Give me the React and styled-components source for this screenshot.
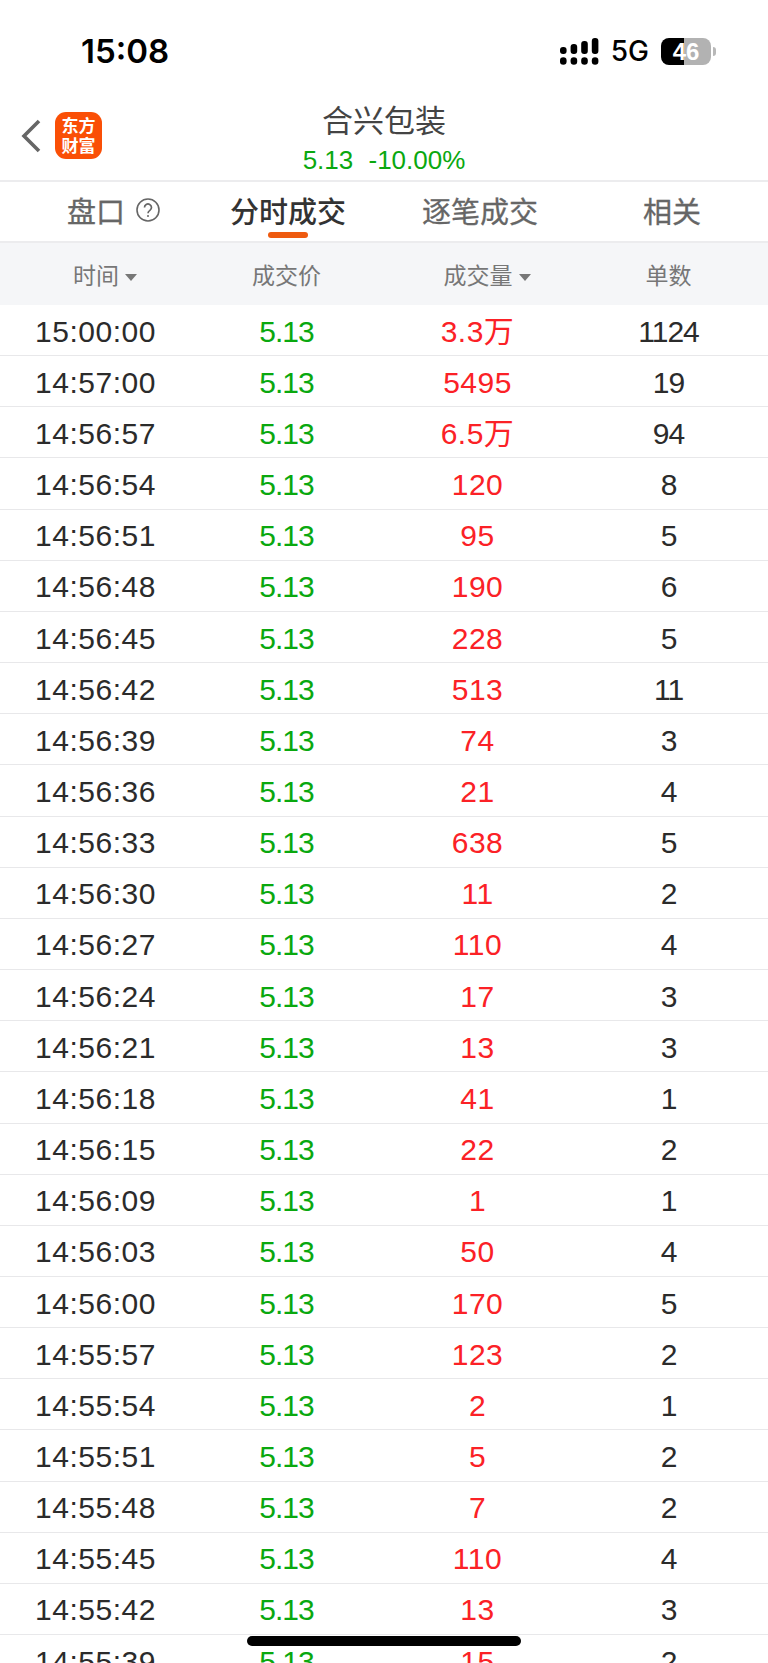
import React from "react";
import styled, { createGlobalStyle } from "styled-components";

const GlobalStyle = createGlobalStyle`
  html, body {
    margin: 0;
    padding: 0;
    background: #fff;
  }
  * {
    box-sizing: border-box;
  }
`;

const FONT = `"Liberation Sans", "Noto Sans CJK SC", sans-serif`;
const CJK = `"Noto Sans CJK SC", "Liberation Sans", sans-serif`;

const Page = styled.div`
  position: relative;
  width: 768px;
  height: 1663px;
  overflow: hidden;
  background: #fff;
  font-family: ${FONT};
`;

const StatusBar = styled.div`
  height: 100px;
  display: flex;
  align-items: flex-start;
  justify-content: space-between;
  padding: 33px 52px 0 81px;
`;

const Clock = styled.div`
  font-family: Inter, sans-serif;
  font-size: 33px;
  line-height: 36px;
  font-weight: 600;
  color: #000;
`;

const StatusIcons = styled.div`
  display: flex;
  align-items: center;
  height: 36px;
  gap: 12px;
`;

const NetworkLabel = styled.span`
  font-family: Inter, sans-serif;
  font-size: 28px;
  font-weight: 500;
  color: #000;
`;

const Battery = styled.div`
  width: 50px;
  height: 27px;
  border-radius: 8px;
  overflow: hidden;
  background: linear-gradient(90deg, #000 0 46%, #b2b2b2 46% 100%);
  color: #fff;
  font-size: 24px;
  font-weight: 700;
  line-height: 27px;
  text-align: center;
`;

const BatteryNub = styled.span`
  width: 3px;
  height: 9px;
  margin-left: -10px;
  border-radius: 0 3px 3px 0;
  background: #b8b8b8;
`;

const NavBar = styled.div`
  height: 82px;
  display: grid;
  grid-template-columns: 1fr auto 1fr;
  align-items: start;
  border-bottom: 2px solid #ececee;
`;

const NavLeft = styled.div`
  display: flex;
  align-items: center;
  gap: 14px;
  padding: 12px 0 0 21px;
`;

const Logo = styled.div`
  width: 47px;
  height: 47px;
  border-radius: 11px;
  background: #fa4f06;
  color: #fff;
  font-family: ${CJK};
  font-size: 17px;
  font-weight: 700;
  line-height: 20px;
  text-align: center;
  padding-top: 3px;
`;

const TitleBlock = styled.div`
  text-align: center;
`;

const Title = styled.div`
  font-family: ${CJK};
  font-size: 31px;
  line-height: 38px;
  color: #444;
`;

const Subtitle = styled.div`
  margin-top: 7px;
  font-size: 26px;
  line-height: 30px;
  color: #0aa80f;
  word-spacing: 8px;
`;

const Tabs = styled.div`
  height: 61px;
  display: grid;
  grid-template-columns: repeat(4, 192px);
  border-bottom: 2px solid #ececee;
`;

const Tab = styled.div`
  position: relative;
  display: flex;
  align-items: center;
  justify-content: center;
  gap: 11px;
  padding: 0 0 3px ${(p) => (p.$lead ? "35px" : "0")};
  font-family: ${CJK};
  font-size: 29px;
  font-weight: ${(p) => (p.$active ? 500 : 400)};
  color: ${(p) => (p.$active ? "#333" : "#666")};
  -webkit-text-stroke: ${(p) => (p.$active ? "0" : "0.3px #666")};
`;

const TabMark = styled.span`
  position: absolute;
  left: 76px;
  bottom: 3px;
  width: 40px;
  height: 6px;
  border-radius: 3px;
  background: #ee5a0f;
`;

const TableHead = styled.div`
  height: 62px;
  display: grid;
  grid-template-columns: repeat(4, 191px);
  align-items: center;
  background: #f5f6f8;
  font-family: ${CJK};
  font-size: 23px;
  color: #777;
  text-align: center;
`;

const Caret = styled.span`
  display: inline-block;
  vertical-align: middle;
  width: 0;
  height: 0;
  margin: 0 -19px 0 6px;
  border-left: 6.5px solid transparent;
  border-right: 6.5px solid transparent;
  border-top: 7px solid #777;
`;

const Row = styled.div`
  height: 51.17px;
  display: grid;
  grid-template-columns: repeat(4, 191px);
  align-items: center;
  padding-top: 3px;
  border-bottom: 1.5px solid #e8e8ea;
  font-size: 30px;
  line-height: 34px;
  text-align: center;
`;

const Cell = styled.div`
  color: ${(p) => p.$color || "#2b2b2b"};
  letter-spacing: ${(p) => p.$spacing || 0}px;
`;

const HomeBar = styled.div`
  position: absolute;
  left: 247px;
  top: 1636px;
  width: 274px;
  height: 10px;
  border-radius: 5px;
  background: #000;
`;

const rows = [
  ["15:00:00", "3.3万", "1124"],
  ["14:57:00", "5495", "19"],
  ["14:56:57", "6.5万", "94"],
  ["14:56:54", "120", "8"],
  ["14:56:51", "95", "5"],
  ["14:56:48", "190", "6"],
  ["14:56:45", "228", "5"],
  ["14:56:42", "513", "11"],
  ["14:56:39", "74", "3"],
  ["14:56:36", "21", "4"],
  ["14:56:33", "638", "5"],
  ["14:56:30", "11", "2"],
  ["14:56:27", "110", "4"],
  ["14:56:24", "17", "3"],
  ["14:56:21", "13", "3"],
  ["14:56:18", "41", "1"],
  ["14:56:15", "22", "2"],
  ["14:56:09", "1", "1"],
  ["14:56:03", "50", "4"],
  ["14:56:00", "170", "5"],
  ["14:55:57", "123", "2"],
  ["14:55:54", "2", "1"],
  ["14:55:51", "5", "2"],
  ["14:55:48", "7", "2"],
  ["14:55:45", "110", "4"],
  ["14:55:42", "13", "3"],
  ["14:55:39", "15", "2"],
];

function SignalIcon() {
  return (
    <svg width="38.4" height="27" viewBox="0 0 38.4 27" fill="#000">
      <rect x="0" y="19.3" width="6.6" height="7.5" rx="3.3" />
      <rect x="10.6" y="19.3" width="6.6" height="7.5" rx="3.3" />
      <rect x="21.2" y="19.3" width="6.6" height="7.5" rx="3.3" />
      <rect x="31.8" y="19.3" width="6.6" height="7.5" rx="3.3" />
      <rect x="0" y="9" width="6.6" height="7" rx="3" />
      <rect x="10.6" y="6" width="6.6" height="10" rx="3" />
      <rect x="21.2" y="3" width="6.6" height="13" rx="3" />
      <rect x="31.8" y="0" width="6.6" height="16" rx="3" />
    </svg>
  );
}

function BackIcon() {
  return (
    <svg width="20" height="34" viewBox="0 0 20 34" fill="none">
      <path d="M18 2 L3 17 L18 32" stroke="#666" strokeWidth="3.6" />
    </svg>
  );
}

function HelpIcon() {
  return (
    <svg width="24" height="24" viewBox="0 0 24 24" fill="none" stroke="#666">
      <circle cx="12" cy="12" r="11" strokeWidth="1.6" />
      <path d="M8.5 9.5a3.5 3.5 0 1 1 5.4 2.9c-1.2.8-1.9 1.4-1.9 2.8" strokeWidth="1.7" />
      <circle cx="12" cy="18" r="1" fill="#666" stroke="none" />
    </svg>
  );
}

export default function App() {
  return (
    <Page>
      <GlobalStyle />
      <StatusBar>
        <Clock>15:08</Clock>
        <StatusIcons>
          <SignalIcon />
          <NetworkLabel>5G</NetworkLabel>
          <Battery>46</Battery>
          <BatteryNub />
        </StatusIcons>
      </StatusBar>
      <NavBar>
        <NavLeft>
          <BackIcon />
          <Logo>
            东方
            <br />
            财富
          </Logo>
        </NavLeft>
        <TitleBlock>
          <Title>合兴包装</Title>
          <Subtitle>5.13 -10.00%</Subtitle>
        </TitleBlock>
      </NavBar>
      <Tabs>
        <Tab $lead>
          盘口
          <HelpIcon />
        </Tab>
        <Tab $active>
          分时成交
          <TabMark />
        </Tab>
        <Tab>逐笔成交</Tab>
        <Tab>相关</Tab>
      </Tabs>
      <TableHead>
        <div>
          时间
          <Caret />
        </div>
        <div>成交价</div>
        <div>
          成交量
          <Caret />
        </div>
        <div>单数</div>
      </TableHead>
      {rows.map(([time, volume, count]) => (
        <Row key={time}>
          <Cell $spacing={0.5}>{time}</Cell>
          <Cell $color="#0aa80f" $spacing={-1}>
            5.13
          </Cell>
          <Cell $color="#fb2126" $spacing={0.5}>
            {volume}
          </Cell>
          <Cell $spacing={-1}>{count}</Cell>
        </Row>
      ))}
      <HomeBar />
    </Page>
  );
}
